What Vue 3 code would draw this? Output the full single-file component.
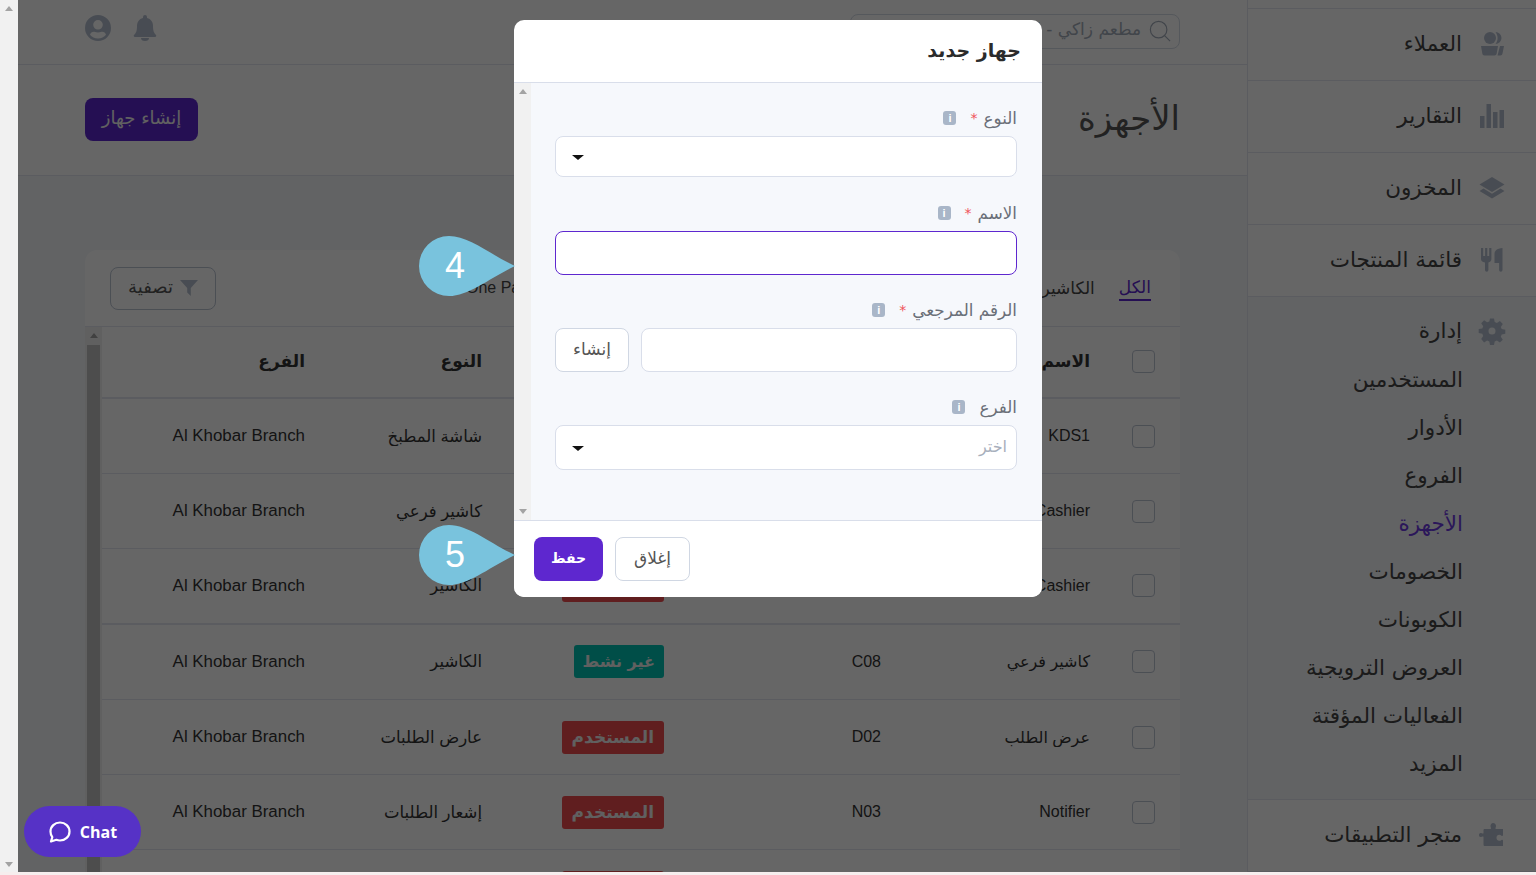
<template>
  <div class="screen" dir="rtl">
    <aside class="sidebar">
      <div class="side-top"></div>
      <a v-for="item in mainMenu" :key="item.label" class="side-item">
        <svg class="side-icon" viewBox="0 0 24 24" v-html="item.icon"></svg>
        <span>{{ item.label }}</span>
      </a>
      <div class="side-group">
        <a class="side-head">
          <svg class="side-icon" viewBox="0 0 24 24" v-html="icons.gear"></svg>
          <span>إدارة</span>
        </a>
        <a v-for="sub in subMenu" :key="sub" class="side-sub" :class="{ active: sub === 'الأجهزة' }">{{ sub }}</a>
      </div>
      <a class="side-item">
        <svg class="side-icon" viewBox="0 0 24 24" v-html="icons.puzzle"></svg>
        <span>متجر التطبيقات</span>
      </a>
    </aside>

    <main class="main">
      <header class="topbar">
        <div class="search">
          <svg class="search-icon" viewBox="0 0 24 24"><circle cx="10.5" cy="10.5" r="9" /><line x1="17" y1="17" x2="23" y2="23" /></svg>
          <span>مطعم زاكي - الفرع الرئيسي</span>
        </div>
        <div class="top-icons">
          <svg class="bell" viewBox="0 0 24 26"><path d="M12 0a2 2 0 0 1 2 2v1c4 1 6 4 6 8 0 5 1 7 3 9 .6.7.2 2-1 2H2c-1.200 0-1.600-1.300-1-2 2-2 3-4 3-9 0-4 2-7 6-8V2a2 2 0 0 1 2-2zM8 23h8a4 3 0 0 1-8 0z" /></svg>
          <svg class="user" viewBox="0 0 26 26"><path fill-rule="evenodd" d="M13 0a13 13 0 1 1 0 26a13 13 0 0 1 0-26zm0 5a4.800 4.800 0 1 0 0 9.600a4.800 4.800 0 0 0 0-9.600zm0 18.500c3.300 0 6.200-1.500 8-3.800-.5-1.700-2-2.900-3.800-2.900-.6 0-1.800.7-4.200.7s-3.600-.7-4.200-.7c-1.800 0-3.300 1.200-3.800 2.900 1.800 2.300 4.700 3.800 8 3.800z" /></svg>
        </div>
      </header>

      <section class="page-head">
        <h1>الأجهزة</h1>
        <button class="primary-btn">إنشاء جهاز</button>
      </section>

      <section class="content">
        <div class="card">
          <div class="card-bar">
            <div class="tabs">
              <a v-for="(tab, i) in tabs" :key="tab" class="tab" :class="{ current: i === 0 }">{{ tab }}</a>
            </div>
            <button class="filter-btn">
              <svg viewBox="0 0 20 20"><path d="M0 1h20l-8 9v9l-4-4v-5z" /></svg>
              تصفية
            </button>
          </div>
          <div class="table-wrap">
            <div class="table">
              <div class="row head">
                <div class="cell"><span class="check"></span></div>
                <div class="cell">الاسم</div>
                <div class="cell">الرقم المرجعي</div>
                <div class="cell">الحالة</div>
                <div class="cell">النوع</div>
                <div class="cell">الفرع</div>
              </div>
              <div v-for="d in devices" :key="d.ref" class="row">
                <div class="cell"><span class="check"></span></div>
                <div class="cell">{{ d.name }}</div>
                <div class="cell">{{ d.ref }}</div>
                <div class="cell"><span class="badge" :class="d.tone">{{ d.status }}</span></div>
                <div class="cell type">{{ d.type }}</div>
                <div class="cell branch">Al Khobar Branch</div>
              </div>
              <!-- last row runs off the bottom of the page, only the badge top shows -->
              <div class="row">
                <div class="cell"></div>
                <div class="cell"></div>
                <div class="cell"></div>
                <div class="cell"><span class="badge red blank"></span></div>
              </div>
            </div>
            <div class="table-scroll">
              <span class="arrow up"></span>
              <div class="table-thumb"></div>
            </div>
          </div>
        </div>
      </section>
    </main>

    <div class="page-scroll">
      <span class="arrow up"></span>
      <span class="arrow down"></span>
    </div>

    <div class="overlay">
      <div class="modal">
        <div class="modal-head">جهاز جديد</div>
        <div class="modal-body">
          <form class="form">
            <div class="field">
              <label>النوع <em>*</em><i class="info">i</i></label>
              <div class="control select-box"><span class="caret"></span></div>
            </div>
            <div class="field name-field">
              <label>الاسم <em>*</em><i class="info">i</i></label>
              <div class="control focused"></div>
            </div>
            <div class="field ref-field">
              <label>الرقم المرجعي <em>*</em><i class="info">i</i></label>
              <div class="ref-row">
                <div class="control"></div>
                <button type="button" class="ghost-btn small">إنشاء</button>
              </div>
            </div>
            <div class="field branch-field">
              <label>الفرع <i class="info">i</i></label>
              <div class="control select-box tall">
                <span class="placeholder">اختر</span>
                <span class="caret"></span>
              </div>
            </div>
          </form>
          <div class="modal-scroll">
            <span class="arrow up"></span>
            <span class="arrow down"></span>
          </div>
        </div>
        <div class="modal-foot">
          <button class="save-btn">حفظ</button>
          <button class="ghost-btn">إغلاق</button>
        </div>
      </div>
    </div>

    <div v-for="c in callouts" :key="c.n" class="callout" :class="c.cls">
      <svg viewBox="0 0 96 60"><path d="M30 0C50 0 72 19 96 30C72 41 50 60 30 60A30 30 0 0 1 30 0Z" /></svg>
      <span>{{ c.n }}</span>
    </div>

    <div class="chat">
      <svg viewBox="0 0 24 24"><path d="M12 2.500c5.300 0 9.500 3.900 9.500 9s-4.200 9-9.500 9c-1.300 0-2.500-.2-3.600-.7L3 21.500l1.300-4.300C3.200 15.700 2.500 13.700 2.500 11.500c0-5.100 4.200-9 9.500-9z" /></svg>
      <span>Chat</span>
    </div>

    <div class="bottom-line"></div>
  </div>
</template>

<script setup>
const icons = {
  users: '<circle cx="10" cy="6" r="6"/><path d="M1 14h17l-1.300 7.500c-.2 1.300-1 2-2.200 2H4.500c-1.200 0-2-.7-2.200-2z"/><path d="M15.500 0a6 6 0 0 1 0 12c2.800-3.200 2.800-8.500 0-12z"/><path d="M20 14h4l-1.500 7.500c-.2 1.300-1 2-2.200 2h-2.800z"/>',
  chart: '<rect x="0" y="12" width="4.500" height="12"/><rect x="6.500" y="0" width="4.500" height="24"/><rect x="13" y="8" width="4.500" height="16"/><rect x="19.500" y="6" width="4.500" height="18"/>',
  layers: '<path d="M12 1l12.500 7.500L12 16-.5 8.500z"/><path d="M3.500 12.500L12 17.700l8.500-5.200 4 2.400L12 22.500-.5 14.900z"/>',
  food: '<path d="M1 0h2.200v8h1.900V0h2.200v8h1.900V0h2.200v11c0 1.800-1.100 3-3 3.400V22a1.700 1.700 0 0 1-3.400 0v-7.600C2.100 14 1 12.800 1 11z"/><path d="M14.500 6c0-3 2-5.500 8-6v22a1.700 1.700 0 0 1-3.400 0v-7h-4.600z"/>',
  gear: '<path fill-rule="evenodd" d="M10 -.5h4l.7 3.600 2.200.9 3-2 2.900 2.900-2 3 .9 2.200 3.600.7v4l-3.600.7-.9 2.200 2 3-2.900 2.900-3-2-2.200.9-.7 3.600h-4l-.7-3.600-2.200-.9-3 2L1.200 20l2-3-.9-2.200-3.600-.7v-4l3.600-.7.9-2.200-2-3L4.100 1.300l3 2 2.200-.9zM12 8.500a3.500 3.500 0 1 0 0 7a3.500 3.500 0 0 0 0-7z"/>',
  puzzle: '<path d="M13 0c2 0 3 1.500 3 3 0 1-.5 1.500-.5 2.500 0 .5.500.5 1 .5H23v6c0 .8-.7 1.200-1.500.7-.8-.5-1.500-.9-2.300-.9-1.500 0-2.700 1.300-2.700 3s1.200 3 2.700 3c.8 0 1.500-.4 2.300-.9.800-.5 1.500-.1 1.500.7V23H5c-1 0-1.500-.5-1.500-1.500V14.500c0-.5 0-1-.5-1-1 0-1.500.5-2.500.5C-.5 14-1 13-1 12s.5-2 1.500-2c1 0 1.500.5 2.500.5.500 0 .5-.5.500-1V7c0-.5.500-1 1-1h5.500c.5 0 1 0 1-.5 0-1-.5-1.500-.5-2.500C10.500 1.500 11.500 0 13 0z"/>'
}

const mainMenu = [
  { label: 'العملاء', icon: icons.users },
  { label: 'التقارير', icon: icons.chart },
  { label: 'المخزون', icon: icons.layers },
  { label: 'قائمة المنتجات', icon: icons.food }
]

const subMenu = ['المستخدمين', 'الأدوار', 'الفروع', 'الأجهزة', 'الخصومات', 'الكوبونات', 'العروض الترويجية', 'الفعاليات المؤقتة', 'المزيد']

const tabs = ['الكل', 'الكاشير', 'كاشير فرعي', 'شاشة المطبخ', 'عارض الطلبات', 'One Page']

const devices = [
  { name: 'KDS1', ref: 'K01', status: 'المستخدم', tone: 'red', type: 'شاشة المطبخ' },
  { name: 'Sub Cashier', ref: 'C12', status: 'المستخدم', tone: 'red', type: 'كاشير فرعي' },
  { name: 'Cashier', ref: 'C01', status: 'المستخدم', tone: 'red', type: 'الكاشير' },
  { name: 'كاشير فرعي', ref: 'C08', status: 'غير نشط', tone: 'teal', type: 'الكاشير' },
  { name: 'عرض الطلب', ref: 'D02', status: 'المستخدم', tone: 'red', type: 'عارض الطلبات' },
  { name: 'Notifier', ref: 'N03', status: 'المستخدم', tone: 'red', type: 'إشعار الطلبات' }
]

const callouts = [
  { n: 4, cls: 'c4' },
  { n: 5, cls: 'c5' }
]
</script>

<style>
html, body { margin: 0; height: 100%; overflow: hidden; }
</style>

<style scoped>
.screen {
  position: relative;
  height: 875px;
  width: 1536px;
  display: flex;
  overflow: hidden;
  background: #f4f7fa;
  color: #333;
  font-family: "DejaVu Sans", sans-serif;
}
.sidebar {
  width: 289px;
  flex: none;
  background: #fff;
  display: flex;
  flex-direction: column;
  border-left: 1px solid #e4e7ef;
  box-sizing: border-box;
}
.side-top { height: 8px; border-bottom: 1px solid #e4e7ef; }
.side-item, .side-head {
  display: flex;
  align-items: center;
  gap: 18px;
  padding-right: 32px;
  height: 71px;
  border-bottom: 1px solid #e4e7ef;
  font-size: 21.5px;
  color: #444;
  flex: none;
}
.side-item span, .side-head span { margin-top: -2px; }
.side-head { border: none; height: 24px; margin-bottom: 12px; }
.side-group {
  background: #f4f7fa;
  padding-top: 22px;
  height: 503px;
  box-sizing: border-box;
  border-bottom: 1px solid #e4e7ef;
  flex: none;
}
.side-icon { width: 24px; height: 24px; margin-top: -1px; fill: #b5bfcf; flex: none; overflow: visible; }
.side-sub {
  display: flex;
  align-items: center;
  height: 48px;
  box-sizing: border-box;
  padding-right: 73px;
  font-size: 21.5px;
  color: #444;
}
.side-sub.active { color: #6c3be0; }

.main { flex: 1; min-width: 0; display: flex; flex-direction: column; }
.topbar {
  height: 65px;
  flex: none;
  background: #fff;
  border-bottom: 1px solid #e4e7ef;
  box-sizing: border-box;
  display: flex;
  align-items: center;
  justify-content: space-between;
  padding: 0 67px;
}
.search {
  width: 330px;
  height: 35px;
  margin-top: -2px;
  border: 1px solid #d5dbe6;
  border-radius: 8px;
  box-sizing: border-box;
  display: flex;
  align-items: center;
  gap: 8px;
  padding: 0 8px;
  overflow: hidden;
  white-space: nowrap;
  font-size: 17px;
  color: #a3acba;
}
.search span { margin-top: -4px; }
.search-icon { width: 22px; height: 22px; fill: none; stroke: #a3acba; stroke-width: 1.300; flex: none; }
.top-icons { display: flex; align-items: center; gap: 22px; margin-top: -8px; }
.bell { width: 24px; height: 26px; fill: #b5bfcf; }
.user { width: 26px; height: 26px; fill: #b5bfcf; }

.page-head {
  height: 111px;
  flex: none;
  background: #fff;
  border-bottom: 1px solid #e4e7ef;
  box-sizing: border-box;
  display: flex;
  align-items: center;
  justify-content: space-between;
  padding: 0 67px;
}
.page-head h1 { margin: -4px 0 0; font-size: 34px; font-weight: 400; color: #555; }
.primary-btn {
  width: 113px;
  height: 43px;
  border: none;
  border-radius: 8px;
  background: #5e27cf;
  color: #f2f2f2;
  font: inherit;
  font-size: 18px;
  padding: 0 0 4px;
  margin-top: -1px;
}

.content { flex: 1; padding: 74px 67px 0; min-height: 0; }
.card {
  background: #fff;
  border-radius: 12px 12px 0 0;
  height: 640px;
  overflow: hidden;
}
.card-bar {
  height: 77px;
  box-sizing: border-box;
  border-bottom: 1px solid #e4e7ef;
  display: flex;
  align-items: center;
  justify-content: space-between;
  padding: 0 29px 0 25px;
}
.tabs { flex: 1; display: flex; gap: 24px; align-items: center; padding-left: 250px; min-width: 0; }
.tab { font-size: 17px; color: #444; padding: 2px 0; white-space: nowrap; }
.tab:last-child { margin-right: auto; font-family: "Liberation Sans", sans-serif; font-size: 16px; }
.tab.current { color: #5e27cf; border-bottom: 2px solid #5e27cf; }
.filter-btn {
  width: 106px;
  height: 43px;
  flex: none;
  background: #fff;
  border: 1px solid #bcc5d3;
  border-radius: 8px;
  display: flex;
  align-items: center;
  justify-content: center;
  gap: 7px;
  font: inherit;
  font-size: 18px;
  padding: 0 0 4px;
  color: #555;
}
.filter-btn svg { width: 18px; height: 18px; fill: #b5bfcf; margin-top: 4px; }

.table-wrap { display: flex; height: 564px; }
.table { flex: 1; min-width: 0; }
.table-scroll {
  width: 17px;
  flex: none;
  background: #f1f1f1;
  display: flex;
  flex-direction: column;
  align-items: center;
  padding-top: 6px;
  box-sizing: border-box;
}
.table-thumb { width: 13px; flex: 1; margin-top: 7px; background: #c1c1c1; }
.row {
  display: grid;
  grid-template-columns: 65px 209px 217px 182px 177px 228px;
  height: 75.300px;
  align-items: center;
  border-bottom: 1px solid #e4e7ef;
  box-sizing: border-box;
  font-family: "Liberation Sans", "DejaVu Sans", sans-serif;
  font-size: 16px;
  color: #333;
}
.row.head {
  height: 72px;
  font-family: "DejaVu Sans", sans-serif;
  font-weight: 700;
  font-size: 17px;
  border-bottom-width: 2px;
}
.row.head .cell { padding-bottom: 2px; }
.row:nth-child(2) { height: 75px; }
.cell { padding-right: 25px; white-space: nowrap; overflow: hidden; display: flex; align-items: center; }
.cell.type { font-size: 16.5px; }
.cell.branch { font-size: 16.900px; }
.row:nth-child(4) { border-bottom-width: 2px; }
.check {
  width: 23px;
  height: 23px;
  box-sizing: border-box;
  border: 1px solid #bcc5d3;
  border-radius: 4px;
  background: #fff;
}
.badge {
  height: 33px;
  padding: 0 10px;
  border-radius: 3px;
  display: flex;
  align-items: center;
  font-family: "DejaVu Sans", sans-serif;
  font-weight: 700;
  font-size: 17px;
  color: #f0f0f0;
}
.badge.red { background: #f04b4f; }
.badge.teal { background: #02c4b4; font-size: 16px; padding: 0 9px; }
.badge.blank { width: 102px; box-sizing: border-box; }

.page-scroll {
  width: 18px;
  flex: none;
  background: #f1f1f1;
  display: flex;
  flex-direction: column;
  align-items: center;
  justify-content: space-between;
  padding: 6px 0 8px;
  box-sizing: border-box;
  position: relative;
  z-index: 3;
}
.arrow { width: 0; height: 0; border-left: 4px solid transparent; border-right: 4px solid transparent; }
.arrow.up { border-bottom: 5px solid #a3a3a3; }
.arrow.down { border-top: 5px solid #a3a3a3; }

.overlay {
  position: absolute;
  top: 0;
  left: 18px;
  right: 0;
  bottom: 3px;
  padding-left: 2px;
  background: rgba(0, 0, 0, 0.6);
  display: flex;
  justify-content: center;
  align-items: flex-start;
  z-index: 2;
}
.modal {
  width: 528px;
  margin-top: 20px;
  background: #fff;
  border-radius: 10px;
  overflow: hidden;
  display: flex;
  flex-direction: column;
}
.modal-head {
  height: 63px;
  box-sizing: border-box;
  border-bottom: 1px solid #d9deea;
  display: flex;
  align-items: center;
  padding: 0 21px 3px 0;
  font-size: 19px;
  font-weight: 700;
  color: #2b2b2b;
}
.modal-body {
  height: 437px;
  background: #f6f8fc;
  display: flex;
}
.form { flex: 1; padding: 0 25px 0 24px; min-width: 0; }
.modal-scroll {
  width: 17px;
  flex: none;
  background: #f1f1f1;
  display: flex;
  flex-direction: column;
  align-items: center;
  justify-content: space-between;
  padding: 6px 0;
  box-sizing: border-box;
}
.field label {
  display: flex;
  align-items: center;
  height: 24px;
  margin-bottom: 6px;
  font-size: 16.800px;
  color: #6a6f78;
}
.field { padding-top: 23px; }
.name-field { padding-top: 24px; }
.field em { color: #f0525a; font-style: normal; font-size: 14px; margin-right: 6px; }
.info {
  width: 13px;
  height: 14px;
  flex: none;
  margin-right: 14px;
  border-radius: 3px;
  background: #a9b6c8;
  color: #fff;
  font-family: "Liberation Sans", sans-serif;
  font-style: normal;
  font-weight: 700;
  font-size: 11px;
  line-height: 14px;
  text-align: center;
}
.control {
  height: 44px;
  box-sizing: border-box;
  border: 1px solid #d9deea;
  border-radius: 8px;
  background: #fff;
}
.select-box {
  height: 41px;
  display: flex;
  align-items: center;
  justify-content: flex-end;
  padding-left: 16px;
}
.select-box.tall { height: 45px; justify-content: space-between; padding-right: 9px; }
.focused { border-color: #5e27cf; }
.caret { width: 0; height: 0; margin-top: 2px; border-left: 6px solid transparent; border-right: 6px solid transparent; border-top: 5px solid #111; }
.placeholder { font-size: 16px; color: #a8afbc; margin-top: -3px; }
.ref-row { display: flex; gap: 12px; }
.ref-row .control { flex: 1; }
.ghost-btn {
  width: 75px;
  height: 44px;
  border: 1px solid #d0d7e3;
  border-radius: 8px;
  background: #fff;
  font: inherit;
  font-size: 17px;
  padding: 0 0 3px;
  color: #555;
}
.ghost-btn.small { width: 74px; }
.modal-foot {
  height: 77px;
  border-top: 1px solid #d9deea;
  box-sizing: border-box;
  background: #fff;
  display: flex;
  gap: 12px;
  padding: 16px 20px 0;
  direction: ltr;
}
.save-btn {
  width: 69px;
  height: 44px;
  border: none;
  border-radius: 8px;
  background: #5e27cf;
  color: #fff;
  font: inherit;
  font-size: 14px;
  font-weight: 700;
  padding: 0 0 3px;
}

.callout {
  position: absolute;
  left: 419px;
  width: 96px;
  height: 60px;
  z-index: 4;
  display: flex;
  align-items: center;
  justify-content: center;
}
.callout svg { position: absolute; inset: 0; fill: #79c3dd; }
.callout span {
  position: relative;
  margin-right: 24px;
  font-family: "Liberation Sans", sans-serif;
  font-size: 36px;
  color: #fff;
}
.c4 { top: 236px; }
.c5 { top: 525px; }

.chat {
  position: absolute;
  left: 24px;
  top: 806px;
  width: 117px;
  height: 51px;
  border-radius: 26px;
  background: #5632c6;
  color: #fff;
  z-index: 5;
  display: flex;
  flex-direction: row-reverse;
  align-items: center;
  justify-content: center;
  gap: 8px;
  font-family: "Open Sans", sans-serif;
  font-weight: 700;
  font-size: 16px;
}
.chat svg { width: 24px; height: 24px; fill: none; stroke: #fff; stroke-width: 2.200; stroke-linejoin: round; }
.bottom-line {
  position: absolute;
  left: 0;
  right: 0;
  bottom: 0;
  height: 3px;
  background: #f6eeee;
  z-index: 3;
}
</style>
